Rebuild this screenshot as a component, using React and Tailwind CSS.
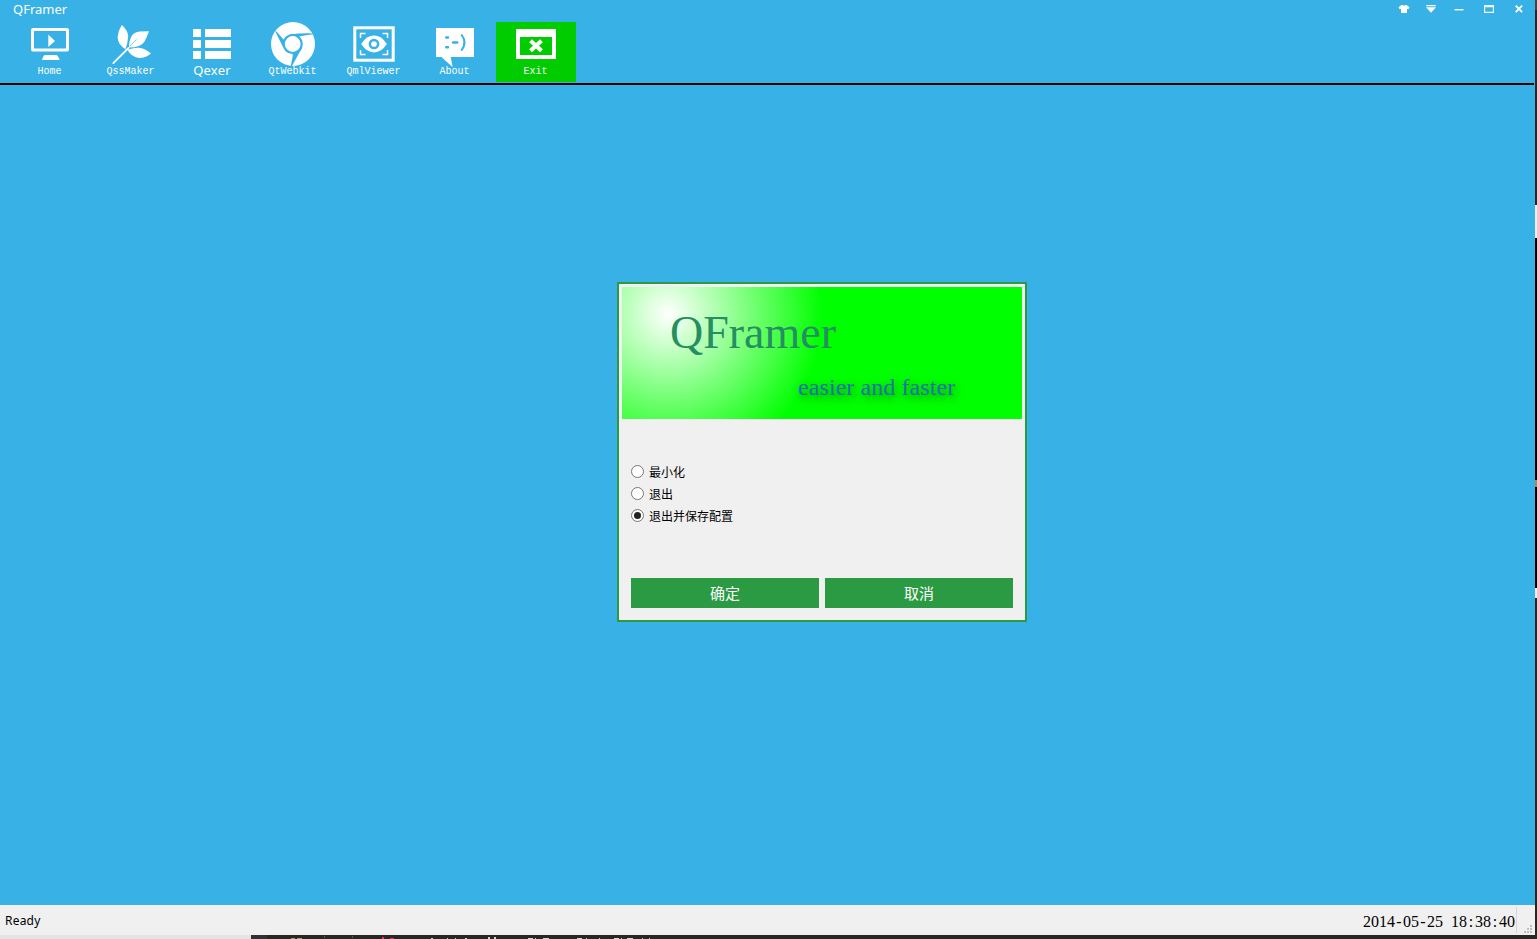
import React from 'react';

const monoLabel = "font-['Liberation_Mono',monospace] text-[10px] leading-[12px]";

const HomeIcon = () => (
  <svg className="h-[44px] w-[44px]" viewBox="28 22 44 44" fill="#fff">
    <path fillRule="evenodd" d="M33 28h34a2 2 0 0 1 2 2v19.500a2 2 0 0 1-2 2H33a2 2 0 0 1-2-2V30a2 2 0 0 1 2-2zM34 31v17.500h32V31z" />
    <path d="M48.300 34.500L55 41l-6.700 6zM44.500 55h11.500q2 0 3.700 5H42q1-4 2.500-5z" />
  </svg>
);

const LeafIcon = () => (
  <svg className="h-[44px] w-[44px]" viewBox="109 22 44 44" fill="#fff">
    <path d="M121.700 25Q127 29 128.200 36Q127.800 43 125.500 49.300Q117.500 44 117.600 37Q118.500 30 121.700 25z" />
    <path d="M149 31.300Q147 37 144.500 41.500Q141 47.500 129 47.600Q129 40 132 35.500Q134.500 32 139.500 31.500z" />
    <path d="M127.500 49.800Q133 47.700 139 47.800Q145 48.500 151 53.400Q145.500 58 139 57.900Q131 57 127.500 49.800z" />
    <path d="M128.500 48L113.300 63.200" stroke="#fff" strokeWidth="1.800" strokeLinecap="round" />
    <path d="M130 46L136.500 39.500" stroke="#37b1e6" strokeWidth="0.600" />
  </svg>
);

const ListIcon = () => (
  <svg className="h-[44px] w-[44px]" viewBox="190 22 44 44" fill="#fff">
    <path d="M193 29h8v8h-8zM205 29h26v8h-26zM193 40h8v8h-8zM205 40h26v8h-26zM193 51h8v8h-8zM205 51h26v8h-26z" />
  </svg>
);

const BrowserIcon = () => (
  <svg className="h-[44px] w-[44px]" viewBox="271 22 44 44">
    <circle cx="293" cy="44" r="22" fill="#fff" />
    <g fill="#37b1e6">
      <path d="M289 34.500Q300 33 314 33.400L313 34.200Q304 35.500 297 37z" />
      <path d="M276 31L284.500 40.500 283 47Q279 39 275.500 32z" />
      <path d="M302.500 47Q297 57 292 66L290.800 65.800Q292.500 59 293 53z" />
    </g>
    <circle cx="292.700" cy="44" r="9" fill="#fff" stroke="#37b1e6" strokeWidth="2.200" />
  </svg>
);

const ViewerIcon = () => (
  <svg className="h-[44px] w-[44px]" viewBox="352 22 44 44" fill="none" stroke="#fff">
    <rect x="354.800" y="27.800" width="38.400" height="32.400" strokeWidth="3" />
    <path d="M360.500 38v-4.500h5M382.500 33.500h5V38M387.500 50v4.500h-5M365.500 54.500h-5V50" strokeWidth="1.500" />
    <path d="M361.200 44q5.300-8.400 12.800-8.400t12.800 8.400q-5.300 8.400-12.800 8.400t-12.800-8.400z" fill="#fff" stroke="none" />
    <circle cx="374" cy="44" r="4.100" stroke="#37b1e6" strokeWidth="2.500" fill="#fff" />
  </svg>
);

const AboutIcon = () => (
  <svg className="h-[44px] w-[44px] overflow-visible" viewBox="433 22 44 44">
    <path d="M436 28h38v29h-23.300l2 10.300L441.500 57H436z" fill="#fff" />
    <g stroke="#37b1e6" strokeWidth="2.400" fill="none" strokeLinecap="round">
      <path d="M446.200 37.500h1.800M446.200 47.300h1.800M453 42.500h4.300" />
      <path d="M461.700 35q5.600 7.500 0 15" strokeWidth="2" />
    </g>
  </svg>
);

const ExitIcon = () => (
  <svg className="h-[44px] w-[44px]" viewBox="514 22 44 44">
    <path fill="#fff" fillRule="evenodd" d="M516 29h40v30h-40zM520 37v18h32V37z" />
    <path d="M530.500 40.800l11 10M541.500 40.800l-11 10" stroke="#fff" strokeWidth="4.200" />
  </svg>
);

const tools = [
  { label: 'Home', Icon: HomeIcon },
  { label: 'QssMaker', Icon: LeafIcon },
  { label: 'Qexer', Icon: ListIcon, sans: true },
  { label: 'QtWebkit', Icon: BrowserIcon },
  { label: 'QmlViewer', Icon: ViewerIcon },
  { label: 'About', Icon: AboutIcon },
  { label: 'Exit', Icon: ExitIcon, active: true },
];

function TitleBar() {
  return (
    <div className="flex h-[22px] items-start justify-between pl-[13px]">
      <span className="font-['Noto_Sans','Open_Sans',sans-serif] text-[13px] leading-[19px]">QFramer</span>
      <svg className="h-[18px] w-[141px]" viewBox="1394 0 141 18" fill="#fff">
        <path d="M1401.500 5h1.300q1.200 1 2.400 0h1.300l3 2.200-1.200 2-1.300-.5V13h-6V8.700l-1.300.5-1.200-2z" />
        <path d="M1426.200 5h9.600v1.300h-9.600zM1426 7.200h10L1431 12.700z" />
        <path d="M1454.500 9h9v1.400h-9z" />
        <path fillRule="evenodd" opacity="0.900" d="M1484 5h10v8h-10zM1485.200 7.300v4.500h7.600V7.300z" />
        <path d="M1515.700 5.700l6.400 6.400M1522.100 5.700l-6.400 6.400" stroke="#fff" strokeWidth="1.900" />
      </svg>
    </div>
  );
}

function Toolbar() {
  return (
    <div className="flex h-[61px] gap-px pl-[10px]">
      {tools.map(({ label, Icon, active, sans }) => (
        <button key={label} className={`flex h-[60px] w-[80px] flex-col items-center ${active ? 'bg-[#00cc00]' : ''}`}>
          <Icon />
          <span className={sans ? "-mt-[5px] font-['Noto_Sans','Open_Sans',sans-serif] text-[13px] leading-[18px] tracking-[0.2px]" : `pr-px ${monoLabel}`}>
            {label}
          </span>
        </button>
      ))}
    </div>
  );
}

function Radio({ label, checked }) {
  return (
    <label className="flex h-[22px] items-start gap-[5px] text-[12px] leading-[22px] text-black">
      <span className="mt-[4px] flex h-[13px] w-[13px] items-center justify-center rounded-full border border-[#777] bg-white">
        {checked && <span className="h-[7px] w-[7px] rounded-full bg-[#222]" />}
      </span>
      <span>{label}</span>
    </label>
  );
}

function ExitDialog() {
  return (
    <div className="flex h-[340px] w-[410px] flex-col border-2 border-[#2a9b43] bg-[#f0f0f0] p-[3px] font-['Noto_Sans_CJK_SC',sans-serif]">
      <div className="h-[132px] w-[400px] shrink-0 bg-[radial-gradient(circle_155px_at_46px_27px,#ffffff_0%,#00ff00_100%)] font-['Liberation_Serif',serif]">
        <div className="pt-[19px] pl-[48px] text-[46px] leading-[54px] text-[#248f60]">QFramer</div>
        <div className="pt-[13px] pl-[176px] text-[24px] leading-[28px] tracking-[0.08px] text-[#2070b0] [text-shadow:2px_3px_8px_rgba(0,60,0,0.55)]">easier and faster</div>
      </div>
      <div className="mt-[42px] flex flex-col pl-[9px]">
        <Radio label="最小化" />
        <Radio label="退出" />
        <Radio label="退出并保存配置" checked />
      </div>
      <div className="mt-auto mb-[9px] flex gap-[6px] px-[9px] text-[15px] leading-[30px] text-white">
        <button className="h-[30px] flex-1 bg-[#2a9b43]">确定</button>
        <button className="h-[30px] flex-1 bg-[#2a9b43]">取消</button>
      </div>
    </div>
  );
}

function StatusBar() {
  return (
    <div className="flex h-[30px] items-center bg-[#f0f0f0] text-black">
      <span className="mt-[2px] pl-[5px] font-['Noto_Sans','Open_Sans',sans-serif] text-[12px] leading-[28px] tracking-[0.2px]">Ready</span>
      <span className="mt-[3px] ml-auto font-['Liberation_Serif',serif] text-[16px] leading-[27px] whitespace-pre">
        2014<span className="inline-block w-[8px] text-center">-</span>05<span className="inline-block w-[8px] text-center">-</span>25<span className="tracking-[4px]"> </span>18<span className="inline-block w-[8px] text-center">:</span>38<span className="inline-block w-[8px] text-center">:</span>40
      </span>
      <span className="ml-px h-[26px] w-px bg-[#d7d7d7]" />
      <svg className="h-[30px] w-[18px]" viewBox="1517 905 18 30" fill="#bfbfbf">
        <path d="M1530 925h2v2h-2zM1527 928h2v2h-2zM1530 928h2v2h-2zM1524 931h2v2h-2zM1527 931h2v2h-2zM1530 931h2v2h-2z" />
      </svg>
    </div>
  );
}

function BackgroundStrip() {
  return (
    <div className="flex h-[4px]">
      <div className="w-[251px] bg-[#e4e4e4]" />
      <div className="w-[16px] bg-[#303035]" />
      <svg className="h-[4px] flex-1 bg-[#272822]" viewBox="267 935 1270 4" preserveAspectRatio="none">
        <path fill="#a09a88" d="M291 938h4v1h-4zM297 938h5v1h-5z" />
        <path fill="#555" d="M324 936h1v2h-1zM352 936h1v2h-1z" />
        <path fill="#f92672" d="M382 937h2v2h-2zM390 938h4v1h-4z" />
        <path fill="#d8d8d0" d="M431 938h2v1h-2zM447 938h1v1h-1zM455 938h1v1h-1zM465 938h2v1h-2zM488 937h2v2h-2zM494 937h2v2h-2zM528 938h5v1h-5zM535 938h1v1h-1zM543 938h6v1h-6zM577 938h5v1h-5zM586 938h1v1h-1zM599 938h1v1h-1zM614 938h5v1h-5zM621 938h1v1h-1zM627 938h6v1h-6zM642 938h1v1h-1zM649 938h1v1h-1z" />
      </svg>
    </div>
  );
}

function BackgroundEdge() {
  return (
    <div className="flex w-[2px] flex-col bg-black">
      <div className="h-[10px] bg-[#404448]" />
      <div className="h-[195px] bg-[#25282a]" />
      <div className="h-[33px] bg-[#eeeeee]" />
      <div className="h-[242px]" />
      <div className="h-[7px] bg-[#a08a60]" />
      <div className="h-[101px]" />
      <div className="h-[10px] bg-[#eeeeee]" />
      <div className="flex-1 bg-[#272822]" />
    </div>
  );
}

export default function App() {
  return (
    <div className="flex h-[939px] w-[1537px] flex-col overflow-hidden bg-[#272822]">
      <div className="flex h-[935px]">
        <div className="flex w-[1535px] flex-col bg-[#37b1e6] text-white">
          <TitleBar />
          <Toolbar />
          <div className="mr-px h-[2px] shrink-0 bg-black" />
          <div className="flex flex-1 items-start pt-[197px] pl-[617px]">
            <ExitDialog />
          </div>
          <StatusBar />
        </div>
        <BackgroundEdge />
      </div>
      <BackgroundStrip />
    </div>
  );
}
